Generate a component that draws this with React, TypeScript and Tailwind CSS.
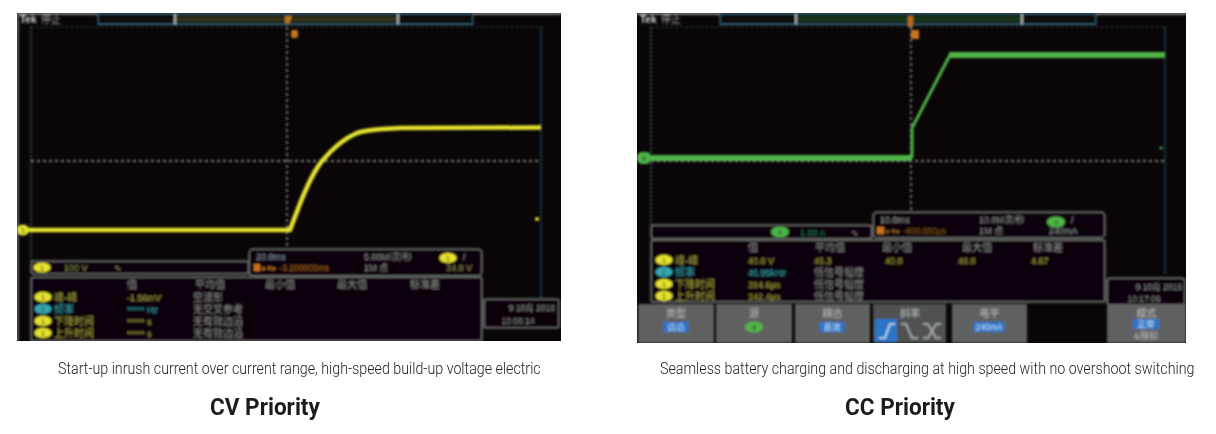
import React from 'react';

const CJK = '"Liberation Sans", "Noto Sans CJK SC", sans-serif';
const GREY = '#6f7172';
const YELLOW = '#e6e42f';
const GREEN = '#4fb548';
const CYAN = '#35a9b5';

// little text helper, screen text is soft so everything sits in a blurred group
const T: React.FC<{ x: number; y: number; c?: string; s?: number; a?: 'start' | 'middle' | 'end'; children: React.ReactNode }> = ({
  x, y, c = '#8d8f8f', s = 9, a = 'start', children,
}) => (
  <text x={x} y={y} fill={c} fontSize={s} textAnchor={a} fontFamily={CJK}>
    {children}
  </text>
);

const Badge: React.FC<{ x: number; y: number; c: string; n: string; w?: number; h?: number }> = ({ x, y, c, n, w = 17, h = 10 }) => (
  <g>
    <ellipse cx={x} cy={y} rx={w / 2} ry={h / 2} fill={c} />
    <text x={x} y={y + 3} fontSize={8} textAnchor="middle" fill="#3a3a10" fontFamily={CJK}>{n}</text>
  </g>
);

const Graticule: React.FC<{ x0: number; x1: number; top: number; bottom: number; rightBottom: number; cx: number; cy: number }> = ({
  x0, x1, top, bottom, rightBottom, cx, cy,
}) => (
  <g fill="none">
    <line x1={x0} x2={x1} y1={top} y2={top} stroke="#33464a" strokeDasharray="2 3" />
    <line x1={x0} x2={x0} y1={top} y2={bottom} stroke="#3c6a72" strokeWidth={1.5} strokeDasharray="2 2" />
    <line x1={x1} x2={x1} y1={top} y2={rightBottom} stroke="#2f6f85" strokeWidth={1.5} strokeDasharray="2 2" />
    <line x1={x0} x2={x1} y1={cy} y2={cy} stroke="#a3a5a3" strokeWidth={1.5} strokeDasharray="3 3" />
    <line x1={cx} x2={cx} y1={top} y2={bottom} stroke="#8e9092" strokeWidth={1.5} strokeDasharray="3 3" />
  </g>
);

const Screen: React.FC<{ w: number; h: number; children: React.ReactNode }> = ({ w, h, children }) => (
  <svg width={w} height={h} viewBox={`0 0 ${w} ${h}`} className="block shrink-0">
    <defs>
      <filter id={`soft${w}`} x="-2%" y="-2%" width="104%" height="104%">
        <feGaussianBlur stdDeviation="0.9" />
      </filter>
    </defs>
    <rect width={w} height={h} fill="#0a0607" />
    <g filter={`url(#soft${w})`}>{children}</g>
  </svg>
);

const TopBar: React.FC<{ boxX: number; boxW: number; t1: number; t2: number; fill: string; w: number }> = ({ boxX, boxW, t1, t2, fill, w }) => (
  <g>
    <rect x={0} y={0} width={w} height={1.5} fill="#b5b7b7" />
    <text x={3} y={10} fontSize={10} fontWeight={700} fill="#d8d8d8" fontFamily={CJK}>Tek</text>
    <T x={24} y={10} c="#a8a8a8" s={10}>停止</T>
    <rect x={boxX} y={0.5} width={boxW} height={11} fill="#08090c" stroke="#3f7a92" />
    <rect x={t1} y={3} width={t2 - t1} height={6} fill={fill} />
    <line x1={t1} x2={t1} y1={0} y2={12} stroke="#d5dbdb" strokeWidth={1.5} />
    <line x1={t2} x2={t2} y1={0} y2={12} stroke="#d5dbdb" strokeWidth={1.5} />
  </g>
);

const Box: React.FC<{ x: number; y: number; w: number; h: number; r?: number }> = ({ x, y, w, h, r = 3 }) => (
  <rect x={x} y={y} width={w} height={h} rx={r} fill="#0a0607" stroke={GREY} strokeWidth={1.5} />
);

const ScopeCV: React.FC = () => (
  <Screen w={544} h={328}>
    <TopBar boxX={81} boxW={375} t1={158} t2={381} fill="#33321f" w={544} />
    <rect x={0} y={0} width={1.5} height={328} fill="#8a8c8c" />
    <Graticule x0={14} x1={524} top={14} bottom={248} rightBottom={284} cx={270} cy={148} />
    <path d="M268 3 H275 L273 9 L270 12 L268 9 Z" fill="#b5761c" />
    <rect x={274} y={17} width={7} height={8} rx={2} fill="#c8761f" />
    <path d="M3 217 H273 C283 190 293 163 305 148 C315 136 328 125 340 120 C352 116 368 116 383 115 L524 114.5" fill="none" stroke={YELLOW} strokeWidth={4.5} />
    <Badge x={6} y={217} c={YELLOW} n="1" w={12} h={11} />
    <circle cx={520} cy={206} r={2} fill={YELLOW} />

    <Box x={14} y={248} w={218} h={13} />
    <Badge x={25} y={254.5} c={YELLOW} n="1" />
    <T x={47} y={258} c="#8d8f55">100 V</T>
    <T x={97} y={258} c="#9a9a66">∿</T>

    <Box x={232} y={236} w={233} h={27} r={4} />
    <T x={239} y={247} c="#8d9aa8">20.0ms</T>
    <rect x={237} y={251} width={6} height={7} fill="#c8761f" />
    <T x={245} y={258} c="#b06a20" s={8.5}>▸▾▸ -3.200000ms</T>
    <T x={347} y={247}>5.00M/次/秒</T>
    <T x={347} y={258}>1M 点</T>
    <Badge x={431} y={245} c={YELLOW} n="1" />
    <T x={446} y={247}>/</T>
    <T x={429} y={258} c="#8d8f55">34.0 V</T>

    <Box x={14} y={264} w={451} h={64} r={2} />
    <T x={115} y={275} a="middle" s={10}>值</T>
    <T x={193} y={275} a="middle" s={10}>平均值</T>
    <T x={263} y={275} a="middle" s={10}>最小值</T>
    <T x={335} y={275} a="middle" s={10}>最大值</T>
    <T x={408} y={275} a="middle" s={10}>标准差</T>

    <Badge x={26} y={284} c={YELLOW} n="1" />
    <T x={37} y={288} c="#a5a63f" s={10}>峰-峰</T>
    <T x={110} y={288} c="#a5a63f">-1.56mV</T>
    <T x={176} y={288} s={10}>空波形</T>
    <Badge x={26} y={296} c={CYAN} n="2" />
    <T x={37} y={300} c={CYAN} s={10}>频率</T>
    <T x={110} y={300} c={CYAN}>***** Hz</T>
    <T x={176} y={300} s={10}>无交叉参考</T>
    <Badge x={26} y={308} c={YELLOW} n="1" />
    <T x={37} y={312} c="#a5a63f" s={10}>下降时间</T>
    <T x={110} y={312} c="#a5a63f">***** s</T>
    <T x={176} y={312} s={10}>无有效边沿</T>
    <Badge x={26} y={320} c={YELLOW} n="1" />
    <T x={37} y={324} c="#a5a63f" s={10}>上升时间</T>
    <T x={110} y={324} c="#a5a63f">***** s</T>
    <T x={176} y={324} s={10}>无有效边沿</T>

    <Box x={467} y={286} w={75} h={29} r={2} />
    <T x={538} y={298} a="end" s={8.5}>9 10月 2018</T>
    <T x={501} y={311} a="middle" s={8.5}>10:08:14</T>
  </Screen>
);

const SoftKey: React.FC<{ x: number; w: number; title: string; children?: React.ReactNode }> = ({ x, w, title, children }) => (
  <g>
    <rect x={x} y={291} width={w} height={39} fill="#5f6161" />
    <T x={x + w / 2} y={304} a="middle" c="#b8baba" s={10}>{title}</T>
    {children}
  </g>
);

const Chip: React.FC<{ x: number; w: number; label: string; y?: number }> = ({ x, w, label, y = 309 }) => (
  <g>
    <rect x={x - w / 2} y={y} width={w} height={10} fill="#2b75c9" />
    <T x={x} y={y + 8} a="middle" c="#cfe2f5" s={8.5}>{label}</T>
  </g>
);

const ScopeCC: React.FC = () => (
  <Screen w={549} h={330}>
    <TopBar boxX={83} boxW={376} t1={159} t2={385} fill="#14351f" w={549} />
    <Graticule x0={14} x1={528} top={14} bottom={212} rightBottom={262} cx={274} cy={148} />
    <rect x={271} y={3} width={5} height={11} fill="#b8691c" />
    <rect x={274} y={17} width={8} height={9} fill="#c8761f" />
    <path d="M14 145 H275" fill="none" stroke={GREEN} strokeWidth={6} />
    <path d="M275 145 V115 L313 42" fill="none" stroke={GREEN} strokeWidth={3} />
    <path d="M312 42 H528" fill="none" stroke={GREEN} strokeWidth={6} />
    <rect x={0} y={139} width={14} height={12} rx={5} fill={GREEN} />
    <text x={7} y={148} fontSize={8} textAnchor="middle" fill="#0e3a14" fontFamily={CJK}>4</text>
    <circle cx={524} cy={135} r={1.5} fill={GREEN} />

    <Box x={14} y={212} w={221} h={14} />
    <Badge x={143} y={219} c={GREEN} n="4" w={18} h={11} />
    <T x={163} y={223} c="#1f7a52">1.00 A</T>
    <T x={214} y={223}>∿</T>

    <Box x={236} y={199} w={232} h={26} r={4} />
    <T x={243} y={210} c="#9a9a9a">10.0ms</T>
    <rect x={240} y={214} width={7} height={7} fill="#c8761f" />
    <T x={249} y={221} c="#8a5a20" s={8.5}>▸▾▸ -800.000μs</T>
    <T x={342} y={210}>10.0M次/秒</T>
    <T x={342} y={221}>1M 点</T>
    <Badge x={419} y={209} c={GREEN} n="4" w={18} h={11} />
    <T x={434} y={210}>/</T>
    <T x={412} y={221} c="#8d9a9a">240mA</T>

    <Box x={14} y={227} w={454} h={62} r={2} />
    <T x={116} y={238} a="middle" s={10}>值</T>
    <T x={193} y={238} a="middle" s={10}>平均值</T>
    <T x={260} y={238} a="middle" s={10}>最小值</T>
    <T x={340} y={238} a="middle" s={10}>最大值</T>
    <T x={411} y={238} a="middle" s={10}>标准差</T>

    <Badge x={27} y={247} c={YELLOW} n="1" />
    <T x={38} y={251} c="#a5a63f" s={10}>峰-峰</T>
    <T x={111} y={251} c="#a5a63f">40.0 V</T>
    <T x={177} y={251} c="#a5a63f">45.3</T>
    <T x={248} y={251} c="#a5a63f">40.0</T>
    <T x={321} y={251} c="#a5a63f">48.0</T>
    <T x={394} y={251} c="#a5a63f">4.67</T>
    <Badge x={27} y={259} c={CYAN} n="2" />
    <T x={38} y={263} c={CYAN} s={10}>频率</T>
    <T x={111} y={263} c={CYAN}>46.95kHz</T>
    <T x={177} y={263} s={10}>低信号幅度</T>
    <Badge x={27} y={271} c={YELLOW} n="1" />
    <T x={38} y={275} c="#a5a63f" s={10}>下降时间</T>
    <T x={111} y={275} c="#a5a63f">384.6μs</T>
    <T x={177} y={275} s={10}>低信号幅度</T>
    <Badge x={27} y={283} c={YELLOW} n="1" />
    <T x={38} y={287} c="#a5a63f" s={10}>上升时间</T>
    <T x={111} y={287} c="#a5a63f">342.4μs</T>
    <T x={177} y={287} s={10}>低信号幅度</T>

    <Box x={470} y={265} w={78} h={27} r={3} />
    <T x={545} y={277} a="end" s={8.5}>9 10月 2018</T>
    <T x={507} y={289} a="middle" s={8.5}>10:17:06</T>

    <SoftKey x={1} w={76} title="类型"><Chip x={39} w={25} label="边沿" /></SoftKey>
    <SoftKey x={79} w={76} title="源">
      <ellipse cx={117} cy={314} rx={9} ry={5.5} fill={GREEN} />
      <text x={117} y={317} fontSize={8} textAnchor="middle" fill="#0e3a14" fontFamily={CJK}>4</text>
    </SoftKey>
    <SoftKey x={158} w={75} title="耦合"><Chip x={195} w={25} label="直流" /></SoftKey>
    <rect x={236} y={291} width={73} height={39} fill="#4f5152" />
    <T x={273} y={304} a="middle" c="#b8baba" s={10}>斜率</T>
    <rect x={238} y={306} width={22} height={23} fill="#2b75c9" />
    <path d="M242 325 L248 325 L253 311 L258 311" fill="none" stroke="#d8e6f2" strokeWidth={1.5} />
    <path d="M264 311 H269 L275 325 H281" fill="none" stroke="#b8baba" strokeWidth={1.5} />
    <path d="M286 311 L291 311 L299 325 L304 325 M286 325 L291 325 L299 311 L304 311" fill="none" stroke="#b8baba" strokeWidth={1.5} />
    <SoftKey x={315} w={75} title="电平"><Chip x={352} w={31} label="240mA" /></SoftKey>
    <SoftKey x={470} w={79} title="模式">
      <Chip x={509} w={26} label="正常" y={306} />
      <T x={509} y={326} a="middle" c="#b8baba" s={9}>&amp;释抑</T>
    </SoftKey>
  </Screen>
);

const Panel: React.FC<{ scope: React.ReactNode; caption: string; title: string; capClass: string; titleClass: string; widthClass: string }> = ({
  scope, caption, title, capClass, titleClass, widthClass,
}) => (
  <div className={`flex flex-col shrink-0 ${widthClass}`}>
    <div className="h-[330px]">{scope}</div>
    <p className={`mt-[16px] whitespace-nowrap text-[16px] leading-[20px] font-light text-[#222] origin-left scale-x-[0.89] ${capClass}`}>{caption}</p>
    <h3 className={`mt-[14px] whitespace-nowrap text-[24px] leading-[28px] font-bold text-[#1c1c1c] origin-left scale-x-[0.94] ${titleClass}`}>{title}</h3>
  </div>
);

export default function App() {
  return (
    <div className="w-[1216px] h-[434px] bg-white overflow-hidden pt-[13px] pl-[17px] flex gap-[76px] font-['Roboto',sans-serif]">
      <Panel
        widthClass="w-[544px]"
        scope={<ScopeCV />}
        caption="Start-up inrush current over current range, high-speed build-up voltage electric"
        title="CV Priority"
        capClass="ml-[41px]"
        titleClass="ml-[193px]"
      />
      <Panel
        widthClass="w-[549px]"
        scope={<ScopeCC />}
        caption="Seamless battery charging and discharging at high speed with no overshoot switching"
        title="CC Priority"
        capClass="ml-[23px]"
        titleClass="ml-[208px]"
      />
    </div>
  );
}
